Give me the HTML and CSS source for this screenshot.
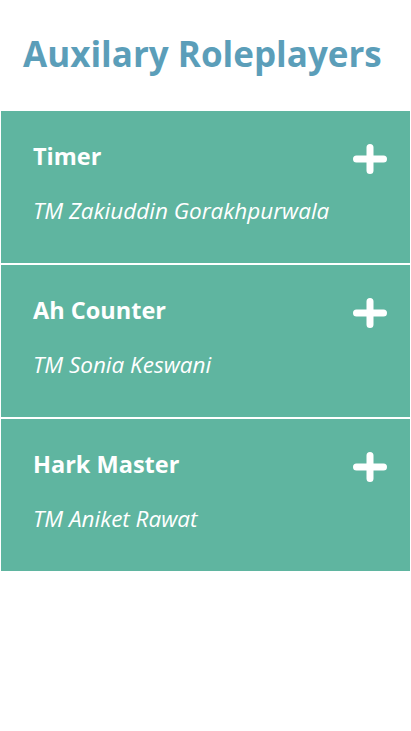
FILE: index.html
```html
<!DOCTYPE html>
<html lang="en">
<head>
<meta charset="utf-8">
<title>Auxilary Roleplayers</title>
<link rel="stylesheet" href="styles.css">
</head>
<body>
<main class="page">
  <h1 class="heading">Auxilary Roleplayers</h1>
  <ul class="roles">
    <li class="role">
      <div class="role-head">
        <span class="role-title">Timer</span>
        <svg class="plus" viewBox="0 0 34 30" width="34" height="30" aria-hidden="true"><path d="M3.5 15H30.5M17 3.5V26.5" stroke="#fff" stroke-width="7" stroke-linecap="round"/></svg>
      </div>
      <p class="role-name">TM Zakiuddin Gorakhpurwala</p>
    </li>
    <li class="role">
      <div class="role-head">
        <span class="role-title">Ah Counter</span>
        <svg class="plus" viewBox="0 0 34 30" width="34" height="30" aria-hidden="true"><path d="M3.5 15H30.5M17 3.5V26.5" stroke="#fff" stroke-width="7" stroke-linecap="round"/></svg>
      </div>
      <p class="role-name">TM Sonia Keswani</p>
    </li>
    <li class="role">
      <div class="role-head">
        <span class="role-title">Hark Master</span>
        <svg class="plus" viewBox="0 0 34 30" width="34" height="30" aria-hidden="true"><path d="M3.5 15H30.5M17 3.5V26.5" stroke="#fff" stroke-width="7" stroke-linecap="round"/></svg>
      </div>
      <p class="role-name">TM Aniket Rawat</p>
    </li>
  </ul>
</main>
</body>
</html>
```
FILE: styles.css
```css
html, body {
  margin: 0;
  padding: 0;
  background: #ffffff;
}
body {
  font-family: "Open Sans", "Noto Sans", sans-serif;
  width: 411px;
  height: 731px;
}
.page {
  display: flex;
  flex-direction: column;
}
.heading {
  margin: 0;
  padding: 30px 0 0 23px;
  height: 111px;
  box-sizing: border-box;
  font-size: 35px;
  font-weight: 700;
  line-height: 48px;
  color: #5b9eb9;
  letter-spacing: 0;
}
.roles {
  list-style: none;
  margin: 0 1px;
  padding: 0;
  display: flex;
  flex-direction: column;
  gap: 2px;
}
.role {
  background: #5fb5a0;
  height: 152px;
  box-sizing: border-box;
  padding: 29px 23px 0 32px;
  color: #ffffff;
}
.role-head {
  display: flex;
  justify-content: space-between;
  align-items: center;
  height: 32px;
}
.role-title {
  font-size: 23.5px;
  font-weight: 700;
  line-height: 32px;
}
.plus {
  display: block;
  margin-top: 5px;
}
.role-name {
  margin: 25px 0 0 0;
  font-size: 22.5px;
  font-style: italic;
  line-height: 28px;
}
```
